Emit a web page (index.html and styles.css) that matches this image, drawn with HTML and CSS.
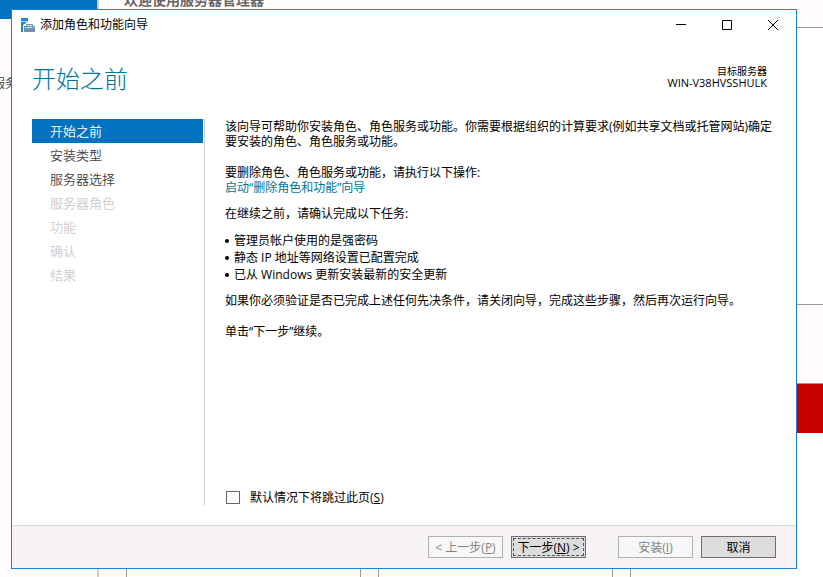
FILE: index.html
```
<!DOCTYPE html>
<html lang="zh-CN">
<head>
    <meta charset="UTF-8">
    <meta name="viewport" content="width=device-width, initial-scale=1.0">
    <title>添加角色和功能向导</title>
    <link rel="stylesheet" href="styles.css">
</head>
<body>

    <!-- Server manager behind the wizard -->
    <div class="manager">
        <div class="manager-nav">
            <div class="manager-nav-active"></div>
            <div class="manager-nav-item">服务</div>
        </div>
        <div class="manager-main">
            <div class="manager-title">欢迎使用服务器管理器</div>
            <div class="welcome"></div>
            <div class="tiles">
                <div class="tile"></div>
                <div class="tile"></div>
                <div class="tile tile-alert"></div>
            </div>
        </div>
    </div>

    <div class="dialog" role="dialog" aria-labelledby="dialog-title">
        <div class="titlebar">
            <svg class="app-icon" width="14" height="14" viewBox="0 0 14 14">
                <path fill="#1e88dc" d="M0 0h7v3H0zM0 4h5v1L2 7v7H0z"/>
                <path fill="#a9d2f2" d="M0 3h7v1H0z"/>
                <path fill="none" stroke="#6f93ad" d="M5.5 8V6.5h6V8"/>
                <path fill="#6f93ad" d="M3 8h11v6H3z"/>
                <path fill="#d7e3ec" d="M6 7h5v1H6zM4 9h9v1H4z"/>
                <path fill="#6f93ad" d="M5 9h1v2H5zM11 9h1v2h-1z"/>
            </svg>
            <span class="titlebar-text" id="dialog-title">添加角色和功能向导</span>
            <button class="window-button" aria-label="最小化">
                <svg width="10" height="10" viewBox="0 0 10 10"><path d="M0 4.5h10"/></svg>
            </button>
            <button class="window-button" aria-label="最大化">
                <svg width="10" height="10" viewBox="0 0 10 10"><path d="M.5 .5h9v9h-9z"/></svg>
            </button>
            <button class="window-button" aria-label="关闭">
                <svg width="10" height="10" viewBox="0 0 10 10"><path d="M0 0l10 10M10 0L0 10"/></svg>
            </button>
        </div>

        <div class="header">
            <h1>开始之前</h1>
            <div class="server">
                <div>目标服务器</div>
                <div class="server-name">WIN-V38HVSSHULK</div>
            </div>
        </div>

        <div class="body">
            <ul class="steps">
                <li class="step active">开始之前</li>
                <li class="step">安装类型</li>
                <li class="step">服务器选择</li>
                <li class="step disabled">服务器角色</li>
                <li class="step disabled">功能</li>
                <li class="step disabled">确认</li>
                <li class="step disabled">结果</li>
            </ul>

            <div class="content">
                <p>该向导可帮助你安装角色、角色服务或功能。你需要根据组织的计算要求(例如共享文档或托管网站)确定要安装的角色、角色服务或功能。</p>
                <p class="section">要删除角色、角色服务或功能，请执行以下操作:<br>
                <a href="#">启动“删除角色和功能”向导</a></p>
                <p class="tasks-intro">在继续之前，请确认完成以下任务:</p>
                <ul class="tasks">
                    <li>管理员帐户使用的是强密码</li>
                    <li>静态 IP 地址等网络设置已配置完成</li>
                    <li>已从 Windows 更新安装最新的安全更新</li>
                </ul>
                <p>如果你必须验证是否已完成上述任何先决条件，请关闭向导，完成这些步骤，然后再次运行向导。</p>
                <p class="section">单击“下一步”继续。</p>

                <div class="skip">
                    <input type="checkbox" id="skip-page">
                    <label for="skip-page">默认情况下将跳过此页(<u>S</u>)</label>
                </div>
            </div>
        </div>

        <div class="footer">
            <button class="button" disabled>&lt; 上一步(<u>P</u>)</button>
            <button class="button default">下一步(<u>N</u>) &gt;</button>
            <button class="button install" disabled>安装(<u>I</u>)</button>
            <button class="button">取消</button>
        </div>
    </div>

</body>
</html>
```

FILE: styles.css
```
* {
    box-sizing: border-box;
}
body {
    margin: 0;
    font-family: "Open Sans", "Noto Sans CJK SC", sans-serif;
    font-size: 12px;
    line-height: 15px;
    color: #000;
}
h1, p, ul {
    margin: 0;
    padding: 0;
}
ul {
    list-style: none;
}

/* Background window */
.manager {
    display: flex;
    height: 100vh;
    overflow: hidden;
    background-color: #fffbff;
}
.manager-nav {
    flex: none;
    width: 99px;
    border-right: 2px solid #ccc;
}
.manager-nav-active {
    height: 19px;
    background-color: #0072c0;
}
.manager-nav-item {
    margin-top: 57px;
    text-indent: -7px;
    color: #444;
}
.manager-main {
    flex: 1;
    min-width: 0;
    display: flex;
    flex-direction: column;
    padding-left: 27px;
}
.manager-title {
    height: 27px;
    margin-left: -2px;
    line-height: 0;
    font-size: 14px;
    font-weight: bold;
    color: #666;
}
.welcome {
    height: 278px;
    border: 1px solid #999;
    border-right: none;
    background-color: #fff;
}
.tiles {
    flex: 1;
    display: flex;
    gap: 17px;
    margin-top: 78px;
}
.tile {
    flex: none;
    width: 235px;
    border: 1px solid #999;
    border-bottom: none;
    background-color: #fff;
}
.tile-alert::before {
    content: "";
    display: block;
    height: 49px;
    background-color: #c80000;
}

/* Wizard window */
.dialog {
    position: absolute;
    top: 9px;
    right: 26px;
    bottom: 8px;
    left: 11px;
    display: flex;
    flex-direction: column;
    border: 1px solid #1883d7;
    background-color: #fff;
}
.titlebar {
    display: flex;
    align-items: center;
    height: 29px;
    padding-left: 9px;
}
.titlebar-text {
    flex: 1;
    margin-left: 5px;
}
.window-button {
    display: flex;
    align-items: center;
    justify-content: center;
    width: 46px;
    height: 28px;
    padding: 0;
    border: none;
    background: none;
}
.window-button svg {
    fill: none;
    stroke: #000;
}
.header {
    display: flex;
    justify-content: space-between;
    height: 80px;
    padding: 26px 29px 0 20px;
}
h1 {
    font-size: 24px;
    font-weight: 300;
    line-height: 28px;
    color: #00739c;
}
.server {
    font-size: 10px;
    line-height: 12px;
    text-align: right;
}
.server-name {
    font-size: 11px;
}
.body {
    flex: 1;
    display: flex;
    padding: 0 20px 20px;
}
.steps {
    flex: none;
    width: 173px;
    padding-right: 1px;
    border-right: 1px solid #ccc;
}
.step {
    padding-left: 18px;
    font-size: 13px;
    font-weight: 350;
    line-height: 24px;
    color: #444;
}
.step.active {
    background-color: #0072c0;
    color: #fff;
}
.step.disabled {
    color: #ccc;
}
.content {
    flex: 1;
    display: flex;
    flex-direction: column;
    padding-left: 20px;
}
.content .section {
    margin-top: 16px;
}
.content .tasks-intro {
    margin-top: 11px;
}
.content a {
    color: #00739c;
    text-decoration: none;
}
.tasks {
    margin: 11px 0 10px;
    line-height: 17px;
}
.tasks li {
    display: flex;
    align-items: center;
    gap: 5px;
}
.tasks li::before {
    content: "";
    width: 4px;
    height: 4px;
    border-radius: 50%;
    background-color: #000;
}
.skip {
    display: flex;
    align-items: center;
    height: 16px;
    margin-top: auto;
}
.skip input {
    appearance: none;
    width: 14px;
    height: 13px;
    margin: 0 10px 0 1px;
    border: 1px solid #666;
    background-color: #fff;
}
.footer {
    display: flex;
    justify-content: flex-end;
    gap: 8px;
    padding: 10px 20px;
    border-top: 1px solid #d9d7d9;
    background-color: #f7f3f7;
}
.button {
    width: 75px;
    height: 22px;
    padding: 0;
    border: 1px solid #707070;
    background-color: #ddd;
    font-family: inherit;
    font-size: 12px;
    line-height: 15px;
    color: #000;
    white-space: nowrap;
}
.button:disabled {
    border-color: #adb2b5;
    background-color: #f7f7f7;
    color: #838383;
}
.button.default {
    outline: 1px dashed #555;
    outline-offset: -3px;
}
.button.install {
    margin-left: 24px;
}
```
